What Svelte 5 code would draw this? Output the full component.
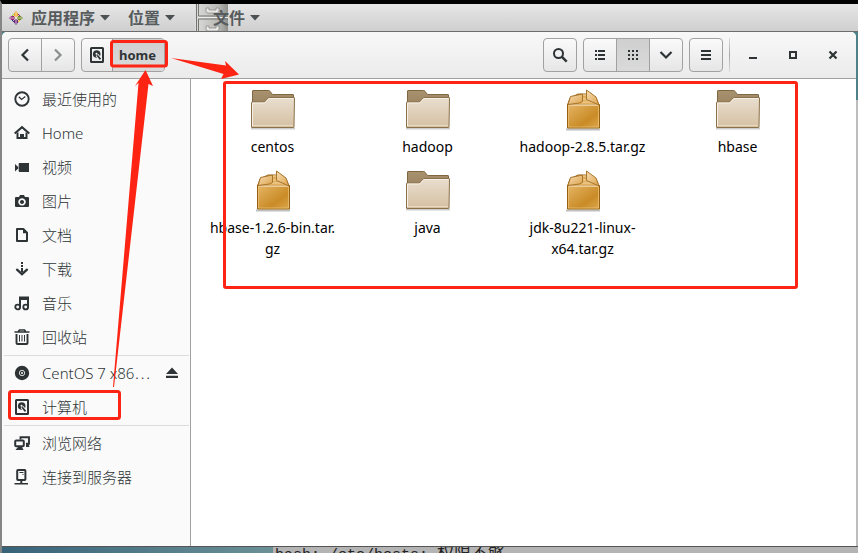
<script>
  const main = [
    { icon: 'clock', label: '最近使用的' },
    { icon: 'house', label: 'Home' },
    { icon: 'video', label: '视频' },
    { icon: 'camera', label: '图片' },
    { icon: 'doc', label: '文档' },
    { icon: 'down', label: '下载' },
    { icon: 'music', label: '音乐' },
    { icon: 'trash', label: '回收站' }
  ];
  const devices = [
    { icon: 'disc', label: 'CentOS 7 x86', more: true },
    { icon: 'disk', label: '计算机' }
  ];
  const network = [
    { icon: 'net', label: '浏览网络' },
    { icon: 'server', label: '连接到服务器' }
  ];
  const files = [
    { kind: 'folder', name: ['centos'] },
    { kind: 'folder', name: ['hadoop'] },
    { kind: 'box', name: ['hadoop-2.8.5.tar.gz'] },
    { kind: 'folder', name: ['hbase'] },
    { kind: 'box', name: ['hbase-1.2.6-bin.tar.', 'gz'] },
    { kind: 'folder', name: ['java'] },
    { kind: 'box', name: ['jdk-8u221-linux-', 'x64.tar.gz'] }
  ];
  const menus = ['应用程序', '位置', '文件'];
</script>

{#snippet glyph(name)}
  <svg class="glyph" viewBox="0 0 16 16" width="16" height="16" aria-hidden="true">
    {#if name === 'clock'}
      <circle cx="8" cy="8" r="6.700" fill="none" stroke="currentColor" stroke-width="1.900" />
      <path d="M4.800 5.800 7.600 8.400 11.300 5.600" fill="none" stroke="currentColor" stroke-width="1.300" />
    {:else if name === 'house'}
      <path d="M.7 8.600 8 2.200l7.300 6.400" fill="none" stroke="currentColor" stroke-width="2" />
      <path d="M3.500 7.500V13H7v-3h2v3h3.500V7.500" fill="none" stroke="currentColor" stroke-width="2" />
    {:else if name === 'video'}
      <path d="M5.500 4h9.500v9H5.500q-.8 0-.8-.8V4.800Q4.700 4 5.500 4zM1 5l3.200 3v1.500L1 12.500z" fill="currentColor" />
    {:else if name === 'camera'}
      <path d="M5 4l1-2h4l1 2h3q1 0 1 1v8q0 1-1 1H2q-1 0-1-1V5q0-1 1-1zm3 1.200a3.700 3.700 0 1 0 .01 0zM8 7a2 2 0 1 1-.01 0z" fill="currentColor" fill-rule="evenodd" />
    {:else if name === 'doc'}
      <path d="M3 2h6.300L13 5.700V14H3z" fill="none" stroke="currentColor" stroke-width="2" stroke-linejoin="round" />
      <path d="M9 2v4.300h4.500z" fill="currentColor" />
    {:else if name === 'down'}
      <path d="M7 1h2v2H7zM7 4h2v2H7zM7 7h2v4H7z" fill="currentColor" />
      <path d="M3 8.700l5 4.500 5-4.500" fill="none" stroke="currentColor" stroke-width="2.300" stroke-linecap="round" />
    {:else if name === 'music'}
      <path d="M6 12V2.500h8V12M6 4h8" fill="none" stroke="currentColor" stroke-width="2" />
      <circle cx="3.700" cy="12" r="2.400" fill="none" stroke="currentColor" stroke-width="1.900" />
      <circle cx="11.700" cy="12" r="2.400" fill="none" stroke="currentColor" stroke-width="1.900" />
    {:else if name === 'trash'}
      <path d="M.5 3h15M4.500 2.500 5.500 1h5l1 1.500" fill="none" stroke="currentColor" stroke-width="1.700" />
      <path d="M2.500 5v9q0 1 1 1h9q1 0 1-1V5" fill="none" stroke="currentColor" stroke-width="1.900" />
      <path d="M5.500 6v6.500M8 6v6.500M10.500 6v6.500" stroke="currentColor" />
    {:else if name === 'disc'}
      <circle cx="8" cy="8" r="7.200" fill="currentColor" />
      <circle cx="8" cy="8" r="2.700" fill="none" stroke="#d8dada" />
      <circle cx="8" cy="8" r="1" fill="#fafafa" />
    {:else if name === 'disk'}
      <rect x="2" y="1" width="12" height="14" rx=".5" fill="none" stroke="currentColor" stroke-width="2" />
      <circle cx="7.700" cy="7" r="3.800" fill="currentColor" />
      <circle cx="7.500" cy="6.700" r="1" fill="#fafafa" />
      <path d="M8 8l4 5" stroke="#fafafa" stroke-width="3.500" />
      <path d="M8.200 8.200l3.300 4.200" stroke="currentColor" stroke-width="1.700" />
    {:else if name === 'net'}
      <path d="M6.500 4.500V2.200H15v6.500h-3" fill="none" stroke="currentColor" stroke-width="1.900" />
      <path d="M12 9h2.500l1 3H12z" fill="currentColor" />
      <rect x="1.200" y="5.500" width="8.600" height="5.800" rx="1" fill="none" stroke="currentColor" stroke-width="2" />
      <path d="M4 12h4l1.500 3h-8z" fill="currentColor" />
    {:else if name === 'server'}
      <rect x="3.200" y="1" width="8.200" height="10" rx=".8" fill="none" stroke="currentColor" stroke-width="2" />
      <path d="M5.500 3.500h4M8.500 5.500h1" stroke="currentColor" />
      <path d="M6.300 11h2v3h-2zM.5 14H14v1.500H.5z" fill="currentColor" />
    {:else if name === 'eject'}
      <path d="M8 2.500 14 9H2zM2 10.800h12V13H2z" fill="currentColor" />
    {:else if name === 'back'}
      <path d="M11 2.500 5.500 8l5.500 5.500" fill="none" stroke="currentColor" stroke-width="2.200" />
    {:else if name === 'forward'}
      <path d="M5 2.500 10.500 8 5 13.500" fill="none" stroke="currentColor" stroke-width="2.200" />
    {:else if name === 'search'}
      <circle cx="6.500" cy="6.500" r="4.500" fill="none" stroke="currentColor" stroke-width="2" />
      <path d="M9.700 9.700l5 5" stroke="currentColor" stroke-width="2.500" />
    {:else if name === 'list'}
      <path d="M3 3h2v2H3zM3 7h2v2H3zM3 11h2v2H3zM6 3h7v2H6zM6 7h7v2H6zM6 11h7v2H6z" fill="currentColor" />
    {:else if name === 'grid'}
      <path d="M3 3h2v2H3zM3 7h2v2H3zM3 11h2v2H3zM7 3h2v2H7zM7 7h2v2H7zM7 11h2v2H7zM11 3h2v2h-2zM11 7h2v2h-2zM11 11h2v2h-2z" fill="currentColor" />
    {:else if name === 'chevron'}
      <path d="M2.500 5 8 10.500 13.500 5" fill="none" stroke="currentColor" stroke-width="2.200" />
    {:else if name === 'menu'}
      <path d="M3 3h10v2H3zM3 7h10v2H3zM3 11h10v2H3z" fill="currentColor" />
    {:else if name === 'min'}
      <path d="M4 10h8v2H4z" fill="currentColor" />
    {:else if name === 'max'}
      <rect x="5" y="5" width="6" height="6" fill="none" stroke="currentColor" stroke-width="2" />
    {:else if name === 'close'}
      <path d="M4.500 4.500l7 7M11.500 4.500l-7 7" stroke="currentColor" stroke-width="2.200" />
    {/if}
  </svg>
{/snippet}

{#snippet place(item)}
  <li>
    <a href="#place">
      {@render glyph(item.icon)}
      <span class="name">{item.label}{#if item.more}<span class="dots">⋯</span>{/if}</span>
    </a>
    {#if item.more}
      <button class="eject" aria-label="弹出">{@render glyph('eject')}</button>
    {/if}
  </li>
{/snippet}

<div class="desktop">
  <nav class="panel">
    <svg class="distro" viewBox="0 0 14 14" width="14" height="14" aria-hidden="true">
      <path d="M3 3h4v4H3z" fill="#9ccd2a" /><path d="M7 3h4v4H7z" fill="#932279" />
      <path d="M3 7h4v4H3z" fill="#262577" /><path d="M7 7h4v4H7z" fill="#efa724" />
      <path d="M7 0l2 2.500V6H5V2.500z" fill="#efa724" /><path d="M14 7l-2.500 2H8V5h3.500z" fill="#6a8a28" />
      <path d="M7 14l-2-2.500V8h4v3.500z" fill="#6b2a83" /><path d="M0 7l2.500-2H6v4H2.500z" fill="#932279" />
      <path d="M2.500 2.500l9 9M11.500 2.500l-9 9M7 1v12M1 7h12" stroke="#f3eeda" stroke-width=".8" />
    </svg>
    {#each menus as label, i}
      <button class="menu" class:files={i === 2}>
        {#if i === 2}
          <svg class="cabinet" viewBox="0 0 33 27" width="33" height="27" preserveAspectRatio="none" aria-hidden="true">
            <defs>
              <linearGradient id="steel"><stop offset="0" stop-color="#dcdcda" /><stop offset=".7" stop-color="#b9b9b6" /><stop offset="1" stop-color="#8f8f8c" /></linearGradient>
            </defs>
            <path d="M0 0h33v27H0z" fill="url(#steel)" />
            <path d="M1.500 0v27M3.500 0v12h29M3.500 27V15h29" fill="none" stroke="#757573" />
            <path d="M4 13.500h29" stroke="#efefed" />
            <path d="M11 4v3q0 2 2 2h9q2 0 2-2V4h-3v2h-7V4zM11 22v3q0 2 2 2h9q2 0 2-2v-3h-3v2h-7v-2z" fill="#e9e9e7" stroke="#8c8c8a" stroke-width=".8" />
          </svg>
        {/if}
        <span>{label}</span>
        <svg viewBox="0 0 10 6" width="10" height="6" aria-hidden="true"><path d="M0 0h10L5 5.500z" fill="#4b5052" /></svg>
      </button>
    {/each}
  </nav>

  <div class="stage">
    <main class="window">
      <header>
        <div class="group">
          <button aria-label="后退">{@render glyph('back')}</button>
          <button class="faint" aria-label="前进">{@render glyph('forward')}</button>
        </div>
        <div class="group path">
          <button class="root" aria-label="计算机">{@render glyph('disk')}</button>
          <button class="on crumb">home</button>
        </div>
        <span class="spring"></span>
        <div class="group"><button aria-label="搜索">{@render glyph('search')}</button></div>
        <div class="group">
          <button aria-label="列表视图">{@render glyph('list')}</button>
          <button class="on" aria-label="图标视图">{@render glyph('grid')}</button>
          <button aria-label="视图选项">{@render glyph('chevron')}</button>
        </div>
        <div class="group"><button aria-label="菜单">{@render glyph('menu')}</button></div>
        <div class="controls">
          <button aria-label="最小化">{@render glyph('min')}</button>
          <button aria-label="最大化">{@render glyph('max')}</button>
          <button aria-label="关闭">{@render glyph('close')}</button>
        </div>
      </header>

      <div class="body">
        <aside>
          <ul>{#each main as item}{@render place(item)}{/each}</ul>
          <ul>{#each devices as item}{@render place(item)}{/each}</ul>
          <ul>{#each network as item}{@render place(item)}{/each}</ul>
        </aside>
        <section class="files-view">
          {#each files as file}
            <figure>
              {#if file.kind === 'folder'}
                <svg viewBox="0 0 48 48" width="48" height="48" aria-hidden="true">
                  <defs>
                    <linearGradient id="front" x2="0" y2="1"><stop offset="0" stop-color="#e9decf" /><stop offset="1" stop-color="#d5c0a2" /></linearGradient>
                    <linearGradient id="rear" x2="0" y2="1"><stop offset="0" stop-color="#a8926f" /><stop offset="1" stop-color="#836d4b" /></linearGradient>
                  </defs>
                  <path d="M2 42.500h44" stroke="#000" stroke-opacity=".2" stroke-width="2" />
                  <path d="M3.500 40V5q0-.5.500-.5h15.500q1 0 1.500.800l2.500 3.200H44q.5 0 .5.500v31z" fill="url(#rear)" stroke="#80673f" />
                  <path d="M2.500 41V16.500q0-.5.500-.5h12.500l3.500-4q.5-.5 1-.5h25q.5 0 .5.500L45 41q0 .5-.5.500H3q-.5 0-.5-.5z" fill="url(#front)" stroke="#8a714a" />
                  <path d="M3.500 40V17H16l4-4.500h24.500" fill="none" stroke="#f6efe5" />
                  <path d="M4 39.500h40" stroke="#e8d9c1" />
                </svg>
              {:else}
                <svg viewBox="0 0 48 48" width="48" height="48" aria-hidden="true">
                  <defs>
                    <linearGradient id="card" x2="1" y2="1"><stop offset="0" stop-color="#e6b566" /><stop offset=".65" stop-color="#c98b26" /><stop offset="1" stop-color="#dda84f" /></linearGradient>
                    <linearGradient id="flap" x2="1" y2="1"><stop offset="0" stop-color="#f6ddb5" /><stop offset="1" stop-color="#dda24a" /></linearGradient>
                  </defs>
                  <path d="M7 43.500h34" stroke="#000" stroke-opacity=".25" stroke-width="2" />
                  <path d="M8.500 19 11 12l8-4h10l8 4 3 7z" fill="#e2ae5b" stroke="#9b691c" />
                  <path d="M24 9h4M24 13h9M22 16h14" stroke="#f2d6a5" />
                  <path d="M8.500 18.500h32v23.500h-32z" fill="url(#card)" stroke="#94600f" />
                  <path d="M9.500 19.500h30v21.500h-30z" fill="none" stroke="#edc47e" stroke-opacity=".7" />
                  <path d="M10 19h29" stroke="#eed2a2" stroke-width="1.500" />
                  <path d="M9 18.500 11.500 10.500 23.500 8v7.500L20.500 17z" fill="url(#flap)" stroke="#a8742a" />
                  <path d="M27.500 4v9.500L40 19l-3-8z" fill="url(#flap)" stroke="#a8742a" />
                </svg>
              {/if}
              <figcaption>{#each file.name as line}<span>{line}</span>{/each}</figcaption>
            </figure>
          {/each}
        </section>
      </div>
    </main>
  </div>

  <div class="terminal"><p>bash: /etc/hosts: <span>权限不够</span></p></div>

  <svg class="marks" viewBox="0 0 858 553" width="858" height="553" aria-hidden="true">
    <g fill="none" stroke="#fe2413" stroke-width="3">
      <rect x="111.500" y="41.500" width="55" height="24.500" rx="2" />
      <rect x="224.500" y="82.500" width="572" height="205" rx="1.500" />
      <rect x="9.500" y="391.500" width="110" height="27" rx="2" />
    </g>
    <path d="M171 58l55 7.500-1-4.500 14 13.500-18 4.500 2.500-5z" fill="#fe2413" />
    <path d="M113 387l25.500-304-3.500 3L145.500 70l7.500 16-4.500-2L114 387z" fill="#fe2413" />
  </svg>
</div>

<style>
  :global(body) {
    margin: 0;
  }
  .desktop {
    position: relative;
    box-sizing: border-box;
    min-height: 100vh;
    display: flex;
    flex-direction: column;
    overflow: hidden;
    border-top: 4px solid #000;
    border-left: 2px solid #858585;
    background: linear-gradient(#4e8188 96px, #bdbdbd 96px);
    color: #2e3436;
    font-family: "Noto Sans", "Noto Sans CJK SC", sans-serif;
    font-size: 14px;
  }
  button {
    margin: 0;
    padding: 0;
    border: 0;
    background: none;
    color: inherit;
    font: inherit;
  }
  svg {
    display: block;
    flex: none;
  }
  .panel {
    display: flex;
    align-items: center;
    height: 27px;
    padding-left: 7px;
    border-bottom: 1px solid #6c6c6c;
    background: linear-gradient(#e6e6e6, #cfcfcf);
  }
  .menu {
    position: relative;
    display: flex;
    align-items: center;
    gap: 5px;
    height: 27px;
    padding: 0 10px 0 8px;
    color: #565b5d;
    font-size: 16px;
    font-weight: 700;
    line-height: 24px;
  }
  .menu span {
    position: relative;
  }
  .files {
    padding-left: 28px;
  }
  .cabinet {
    position: absolute;
    left: 10px;
    top: 0;
  }
  .stage {
    flex: 1;
    display: flex;
    padding-right: 2px;
  }
  .window {
    flex: 1;
    display: flex;
    flex-direction: column;
    border-radius: 5px 5px 0 0;
    overflow: hidden;
    background: #fff;
  }
  header {
    display: flex;
    align-items: center;
    gap: 6px;
    padding: 6px 3px 6px 6px;
    border-bottom: 1px solid #a1a1a1;
    background: linear-gradient(#f8f8f8, #ebebeb);
  }
  .group {
    display: flex;
    box-sizing: border-box;
    height: 34px;
    border: 1px solid #a1a1a1;
    border-radius: 4px;
    overflow: hidden;
    background: linear-gradient(#fafafa, #e6e6e6);
  }
  .group button {
    display: flex;
    align-items: center;
    justify-content: center;
    width: 32px;
  }
  .group button + button {
    width: 33px;
    border-left: 1px solid #a1a1a1;
  }
  .group .faint {
    color: #8b8e8f;
  }
  .group .on {
    background: linear-gradient(#cfcfcf, #dadada);
  }
  .group .root {
    width: 30px;
  }
  .group button.crumb {
    width: 52px;
    padding-right: 2px;
    font-size: 13px;
    font-weight: 700;
  }
  .spring {
    flex: 1;
  }
  .controls {
    display: flex;
    padding-left: 3px;
    border-left: 1px solid;
    border-image: linear-gradient(#e0e0e0, #a6a6a6, #e0e0e0) 1;
  }
  .controls button {
    display: flex;
    align-items: center;
    justify-content: center;
    width: 40px;
    height: 34px;
  }
  .body {
    flex: 1;
    display: flex;
  }
  aside {
    box-sizing: border-box;
    flex: none;
    width: 189px;
    padding: 3px 1px 0 2px;
    border-right: 1px solid #a1a1a1;
    background: #fafafa;
  }
  ul {
    margin: 0;
    padding: 0;
    list-style: none;
  }
  ul + ul {
    margin-top: 1px;
    border-top: 1px solid #dcdcdc;
  }
  li {
    display: flex;
    align-items: center;
    height: 34px;
    padding: 0 9px 0 10px;
  }
  li a {
    flex: 1;
    display: flex;
    align-items: center;
    gap: 12px;
    color: inherit;
    font-size: 15px;
    line-height: 24px;
    text-decoration: none;
    white-space: nowrap;
  }
  .dots {
    font-family: "Noto Sans CJK SC", sans-serif;
  }
  .name {
    font-weight: 300;
  }
  .files-view {
    flex: 1;
    display: grid;
    grid-template-columns: repeat(auto-fill, 155px);
    align-content: start;
    row-gap: 10px;
    padding: 7px 0 0 4px;
  }
  figure {
    display: flex;
    flex-direction: column;
    align-items: center;
    gap: 2px;
    margin: 0;
    color: #000;
  }
  figcaption {
    line-height: 21px;
    text-align: center;
  }
  figcaption span {
    display: block;
    white-space: nowrap;
  }
  .terminal {
    height: 6px;
    overflow: hidden;
    padding-left: 273px;
    border-top: 1px solid #555;
    background: linear-gradient(90deg, #37637a, #6b9096 271px, #b4b4b4 271px);
    color: #222;
    font-family: "Liberation Mono", "Noto Sans CJK SC", monospace;
    font-size: 15px;
  }
  .terminal p {
    margin: 0;
    line-height: 15px;
    white-space: nowrap;
  }
  .terminal span {
    font-size: 17px;
  }
  .marks {
    position: absolute;
    left: -2px;
    top: -4px;
    pointer-events: none;
  }
</style>
